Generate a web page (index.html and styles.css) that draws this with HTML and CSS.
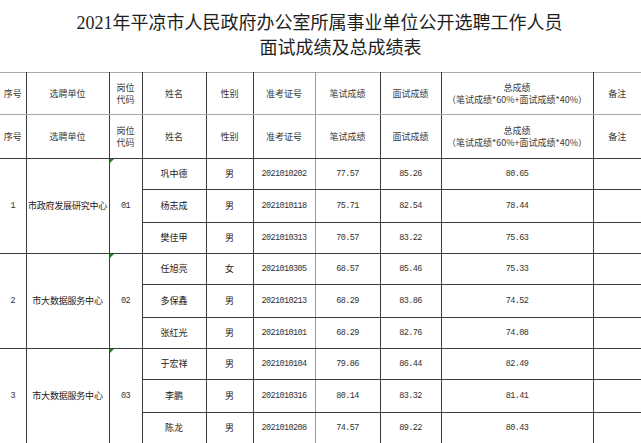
FILE: index.html
```html
<!DOCTYPE html>
<html lang="zh-CN">
<head>
<meta charset="utf-8">
<title>面试成绩及总成绩表</title>
<link rel="stylesheet" href="styles.css">
</head>
<body>
<div class="title">
  <div class="title-line1">2021年平凉市人民政府办公室所属事业单位公开选聘工作人员</div>
  <div class="title-line2">面试成绩及总成绩表</div>
</div>
<table class="sheet">
  <colgroup>
    <col class="c-no"><col class="c-unit"><col class="c-code"><col class="c-name"><col class="c-sex"><col class="c-id"><col class="c-written"><col class="c-interview"><col class="c-total"><col class="c-note">
  </colgroup>
  <tr class="head head-1">
    <td class="first">序号</td><td>选聘单位</td><td class="lh">岗位<br>代码</td><td class="lite">姓名</td><td>性别</td><td class="lite-r">准考证号</td><td>笔试成绩</td><td>面试成绩</td><td class="lh">总成绩<br>（笔试成绩*60%+面试成绩*40%）</td><td class="last">备注</td>
  </tr>
  <tr class="head head-2">
    <td class="first">序号</td><td>选聘单位</td><td class="lh">岗位<br>代码</td><td class="lite">姓名</td><td>性别</td><td class="lite-r">准考证号</td><td>笔试成绩</td><td>面试成绩</td><td class="lh">总成绩<br>（笔试成绩*60%+面试成绩*40%）</td><td class="last">备注</td>
  </tr>

  <tr class="r1">
    <td class="first num" rowspan="3">1</td><td class="unit" rowspan="3">市政府发展研究中心</td><td class="code num" rowspan="3">01</td>
    <td class="lite">巩中德</td><td>男</td><td class="lite-r id">2021010202</td><td class="num">77.57</td><td class="num">85.26</td><td class="num">80.65</td><td class="last"></td>
  </tr>
  <tr class="r2">
    <td class="lite">杨志成</td><td>男</td><td class="lite-r id">2021010118</td><td class="num">75.71</td><td class="num">82.54</td><td class="num">78.44</td><td class="last"></td>
  </tr>
  <tr class="r3">
    <td class="lite">樊佳甲</td><td>男</td><td class="lite-r id">2021010313</td><td class="num">70.57</td><td class="num">83.22</td><td class="num">75.63</td><td class="last"></td>
  </tr>

  <tr class="r1">
    <td class="first num" rowspan="3">2</td><td class="unit" rowspan="3">市大数据服务中心</td><td class="code num" rowspan="3">02</td>
    <td class="lite">任旭亮</td><td>女</td><td class="lite-r id">2021010305</td><td class="num">68.57</td><td class="num">85.46</td><td class="num">75.33</td><td class="last"></td>
  </tr>
  <tr class="r2">
    <td class="lite">多保鑫</td><td>男</td><td class="lite-r id">2021010213</td><td class="num">68.29</td><td class="num">83.86</td><td class="num">74.52</td><td class="last"></td>
  </tr>
  <tr class="r3">
    <td class="lite">张红光</td><td>男</td><td class="lite-r id">2021010101</td><td class="num">68.29</td><td class="num">82.76</td><td class="num">74.08</td><td class="last"></td>
  </tr>

  <tr class="r1">
    <td class="first num" rowspan="3">3</td><td class="unit" rowspan="3">市大数据服务中心</td><td class="code num" rowspan="3">03</td>
    <td class="lite">于宏祥</td><td>男</td><td class="lite-r id">2021010104</td><td class="num">79.86</td><td class="num">86.44</td><td class="num">82.49</td><td class="last"></td>
  </tr>
  <tr class="r2">
    <td class="lite">李鹏</td><td>男</td><td class="lite-r id">2021010316</td><td class="num">80.14</td><td class="num">83.32</td><td class="num">81.41</td><td class="last"></td>
  </tr>
  <tr class="r3 bottom">
    <td class="lite">陈龙</td><td>男</td><td class="lite-r id">2021010208</td><td class="num">74.57</td><td class="num">89.22</td><td class="num">80.43</td><td class="last"></td>
  </tr>
</table>
</body>
</html>
```
FILE: styles.css
```css
html, body {
  margin: 0;
  padding: 0;
  background: #ffffff;
}

body {
  font-family: "Noto Sans CJK SC", "Noto Sans", sans-serif;
  color: #222222;
  width: 641px;
  overflow: hidden;
}

.title {
  height: 72px;
  display: flex;
  flex-direction: column;
  align-items: center;
  box-sizing: border-box;
  padding-top: 11px;
  font-family: "Liberation Serif", "Noto Sans CJK SC", serif;
  font-size: 18px;
  color: #1e1e1e;
}

.title-line1 {
  line-height: 25px;
  padding-right: 2px;
}

.title-line2 {
  line-height: 25px;
  padding-left: 40px;
}

.sheet {
  border-collapse: collapse;
  table-layout: fixed;
  width: 641px;
  font-size: 9px;
}

.c-no { width: 26px; }
.c-unit { width: 83px; }
.c-code { width: 33px; }
.c-name { width: 64px; }
.c-sex { width: 47px; }
.c-id { width: 62px; }
.c-written { width: 65px; }
.c-interview { width: 61px; }
.c-total { width: 152px; }
.c-note { width: 48px; }

.sheet td {
  border: 1px solid #3c3c3c;
  padding: 0;
  text-align: center;
  vertical-align: middle;
  line-height: 12px;
  white-space: nowrap;
  overflow: visible;
}

.sheet td.first { border-left: none; }
.sheet td.last { border-right: none; }

.sheet td.lite { border-left-color: #9a9a9a; }
.sheet td.lite-r { border-right-color: #9a9a9a; }

.head td {
  color: #3a3a3a;
  border-top-color: #a8a8a8;
  border-bottom-color: #a8a8a8;
}

.head-1 td { height: 41px; }
.head-2 td { height: 43px; border-bottom-color: #3c3c3c; }

.sheet .r1 td { height: 30px; }
.sheet .r2 td { height: 32px; border-top-color: #a0a0a0; }
.sheet .r3 td { height: 30px; border-top-color: #a0a0a0; }
.sheet .bottom td { border-bottom: 2px solid #a0a0a0; }
.sheet td[rowspan] { border-bottom-color: #3c3c3c; }

.sheet td.unit {
  letter-spacing: -0.2px;
}

.sheet td.num,
.sheet td.id {
  font-family: "Liberation Mono", monospace;
  font-size: 8.5px;
  letter-spacing: -0.6px;
  color: #333333;
}

.sheet td.code {
  position: relative;
}

.sheet td.code::before {
  content: "";
  position: absolute;
  left: 0;
  top: 0;
  width: 0;
  height: 0;
  border-top: 4px solid #1f8a1f;
  border-right: 4px solid transparent;
}
```
